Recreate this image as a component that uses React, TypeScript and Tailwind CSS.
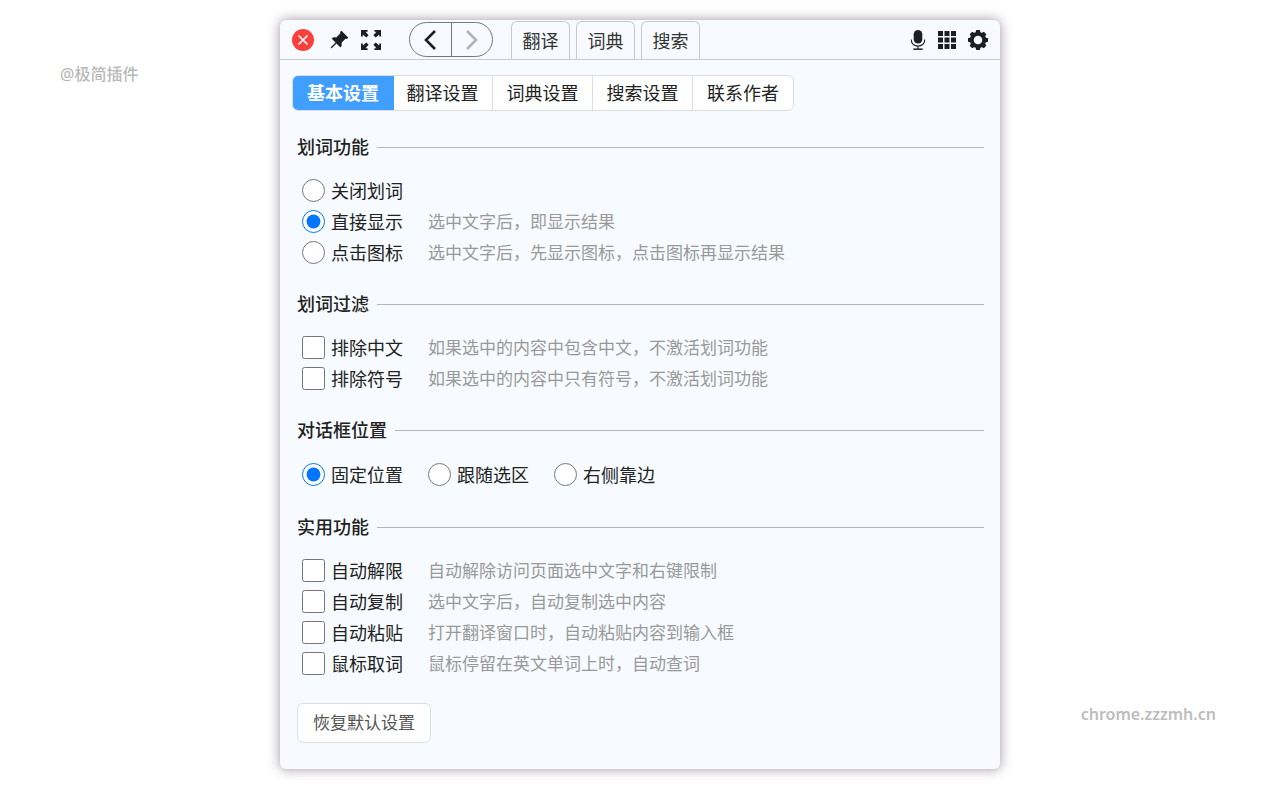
import { useState } from "react";
import { BsPinAngleFill } from "react-icons/bs";

const navTabs = ["翻译", "词典", "搜索"];

const settingTabs = ["基本设置", "翻译设置", "词典设置", "搜索设置", "联系作者"];

const selectionModes = [
  { value: "off", label: "关闭划词" },
  { value: "direct", label: "直接显示", hint: "选中文字后，即显示结果" },
  {
    value: "icon",
    label: "点击图标",
    hint: "选中文字后，先显示图标，点击图标再显示结果",
  },
];

const filters = [
  {
    value: "chinese",
    label: "排除中文",
    hint: "如果选中的内容中包含中文，不激活划词功能",
  },
  {
    value: "symbol",
    label: "排除符号",
    hint: "如果选中的内容中只有符号，不激活划词功能",
  },
];

const positions = [
  { value: "fixed", label: "固定位置" },
  { value: "follow", label: "跟随选区" },
  { value: "right", label: "右侧靠边" },
];

const utilities = [
  { value: "unlock", label: "自动解限", hint: "自动解除访问页面选中文字和右键限制" },
  { value: "copy", label: "自动复制", hint: "选中文字后，自动复制选中内容" },
  { value: "paste", label: "自动粘贴", hint: "打开翻译窗口时，自动粘贴内容到输入框" },
  { value: "hover", label: "鼠标取词", hint: "鼠标停留在英文单词上时，自动查词" },
];

const CloseIcon = () => (
  <svg viewBox="0 0 22 22" className="size-[22px]">
    <circle cx="11" cy="11" r="11" fill="#f9403c" />
    <path d="M6.5 6.5l9 9M15.5 6.5l-9 9" stroke="#fff" strokeWidth="1.6" />
  </svg>
);

const ExpandIcon = () => (
  <svg viewBox="0 0 20 20" className="size-5" fill="currentColor">
    {[0, 90, 180, 270].map((angle) => (
      <path
        key={angle}
        d="M0 0h6.6v1.8H4.5l3.1 3.5-2.3 2.3-3.5-3.1v2.1H0z"
        transform={`rotate(${angle} 10 10)`}
      />
    ))}
  </svg>
);

const MicIcon = () => (
  <svg viewBox="0 0 16 20" className="h-5 w-4" fill="none" stroke="currentColor">
    <rect x="3.7" y="0" width="8.6" height="13.6" rx="4.3" fill="currentColor" stroke="none" />
    <path d="M1.4 9.5v1.2a6.6 5.4 0 0 0 13.2 0V9.5M8 16.2V19" strokeWidth="1.1" />
    <path d="M3.3 19.2h9.4" strokeWidth="1.5" />
  </svg>
);

const GridIcon = () => (
  <svg viewBox="0 0 18 18" className="size-[18px]" fill="currentColor">
    {[0, 6.5, 13].map((y) =>
      [0, 6.5, 13].map((x) => (
        <rect key={`${x}-${y}`} x={x} y={y} width="5" height="5" />
      ))
    )}
  </svg>
);

const GearIcon = () => (
  <svg viewBox="0 0 20 20" className="size-5" fill="none" stroke="currentColor">
    <circle cx="10" cy="10" r="6.2" strokeWidth="3.8" />
    {[0, 45, 90, 135, 180, 225, 270, 315].map((angle) => (
      <path
        key={angle}
        d="M7.4 3L8.2 0h3.6l.8 3z"
        fill="currentColor"
        stroke="none"
        transform={`rotate(${angle} 10 10)`}
      />
    ))}
  </svg>
);

type Item = { value: string; label: string; hint?: string };

type OptionProps = {
  item: Item;
  type: "radio" | "checkbox";
  name: string;
  checked: boolean;
  onChange: () => void;
};

const Option = ({ item, type, name, checked, onChange }: OptionProps) => (
  <div className="flex h-[31px] items-center">
    <label className="flex w-[126px] shrink-0 items-center gap-1.5 text-lg whitespace-nowrap text-[#222]">
      <input
        type={type}
        name={name}
        checked={checked}
        onChange={onChange}
        className="size-[23px] shrink-0 accent-[#0075ff]"
      />
      {item.label}
    </label>
    {item.hint && <span className="text-[17px] text-[#999]">{item.hint}</span>}
  </div>
);

const Section = ({ title, children }: { title: string; children: React.ReactNode }) => (
  <fieldset className="mb-6 border-t border-[#b4b7ba]">
    <legend className="pr-2 text-lg leading-6 font-medium text-[#222]">{title}</legend>
    <div className="pt-4 pl-[5px]">{children}</div>
  </fieldset>
);

export default function App() {
  const [tab, setTab] = useState(settingTabs[0]);
  const [mode, setMode] = useState("direct");
  const [position, setPosition] = useState("fixed");
  const [enabled, setEnabled] = useState<string[]>([]);

  const toggle = (value: string) =>
    setEnabled((prev) =>
      prev.includes(value) ? prev.filter((v) => v !== value) : [...prev, value]
    );

  const reset = () => {
    setMode("direct");
    setPosition("fixed");
    setEnabled([]);
  };

  return (
    <div className="relative min-h-screen bg-white px-4 py-5 font-['Noto_Sans','Noto_Sans_CJK_SC',sans-serif]">
      <span className="absolute top-[62px] left-[60px] text-base font-medium text-[#b9b9b9]">
        @极简插件
      </span>
      <a
        href="#"
        className="absolute right-16 bottom-[74px] text-base font-semibold text-[#bdbdbd]"
      >
        chrome.zzzmh.cn
      </a>

      <main className="mx-auto max-w-[720px] rounded-md bg-[#f7fbff] pb-[26px] shadow-[0_0_12px_rgba(60,40,60,0.5)]">
        {/* Header */}
        <header className="flex h-10 items-center border-b border-[#c6cacf] px-3 text-[#1b1f23]">
          <button type="button" aria-label="关闭" className="mr-[15px]">
            <CloseIcon />
          </button>
          <button type="button" aria-label="固定" className="mr-3">
            <BsPinAngleFill className="size-5" />
          </button>
          <button type="button" aria-label="全屏">
            <ExpandIcon />
          </button>

          <div className="ml-7 flex h-[35px] w-[84px] overflow-hidden rounded-full border border-[#777]">
            <button
              type="button"
              aria-label="后退"
              className="flex flex-1 items-center justify-center border-r border-[#777]"
            >
              <svg viewBox="0 0 12 20" className="h-5 w-3" fill="none" stroke="currentColor">
                <path d="M11 1L2 10l9 9" strokeWidth="2.6" />
              </svg>
            </button>
            <button
              type="button"
              aria-label="前进"
              className="flex flex-1 items-center justify-center text-[#b0b3b7]"
            >
              <svg viewBox="0 0 12 20" className="h-5 w-3" fill="none" stroke="currentColor">
                <path d="M1 1l9 9-9 9" strokeWidth="2.6" />
              </svg>
            </button>
          </div>

          <nav className="ml-[18px] flex gap-1.5 self-end">
            {navTabs.map((name) => (
              <button
                key={name}
                type="button"
                className="h-[38px] w-[59px] rounded-t-md border border-b-0 border-[#c6cacf] text-lg text-[#333]"
              >
                {name}
              </button>
            ))}
          </nav>

          <div className="ml-auto flex items-center gap-3">
            <button type="button" aria-label="语音">
              <MicIcon />
            </button>
            <button type="button" aria-label="更多">
              <GridIcon />
            </button>
            <button type="button" aria-label="设置">
              <GearIcon />
            </button>
          </div>
        </header>

        {/* Setting tabs */}
        <div className="mx-3 mt-[15px] flex w-fit overflow-hidden rounded-md border border-[#d9dde2] bg-white">
          {settingTabs.map((name) => (
            <button
              key={name}
              type="button"
              onClick={() => setTab(name)}
              className={
                name === tab
                  ? "-m-px h-9 w-[102px] bg-[#409eff] text-lg font-bold text-white"
                  : "h-[34px] w-[100px] border-[#d9dde2] text-lg text-[#222] not-last:border-r"
              }
            >
              {name}
            </button>
          ))}
        </div>

        {/* Settings */}
        <form className="mt-6 mr-4 ml-[17px]">
          <Section title="划词功能">
            {selectionModes.map((item) => (
              <Option
                key={item.value}
                item={item}
                type="radio"
                name="mode"
                checked={mode === item.value}
                onChange={() => setMode(item.value)}
              />
            ))}
          </Section>

          <Section title="划词过滤">
            {filters.map((item) => (
              <Option
                key={item.value}
                item={item}
                type="checkbox"
                name={item.value}
                checked={enabled.includes(item.value)}
                onChange={() => toggle(item.value)}
              />
            ))}
          </Section>

          <Section title="对话框位置">
            <div className="flex flex-wrap py-px">
              {positions.map((item) => (
                <Option
                  key={item.value}
                  item={item}
                  type="radio"
                  name="position"
                  checked={position === item.value}
                  onChange={() => setPosition(item.value)}
                />
              ))}
            </div>
          </Section>

          <Section title="实用功能">
            {utilities.map((item) => (
              <Option
                key={item.value}
                item={item}
                type="checkbox"
                name={item.value}
                checked={enabled.includes(item.value)}
                onChange={() => toggle(item.value)}
              />
            ))}
          </Section>

          <button
            type="button"
            onClick={reset}
            className="h-10 rounded-md border border-[#dcdfe6] bg-white px-[15px] text-[17px] text-[#555]"
          >
            恢复默认设置
          </button>
        </form>
      </main>
    </div>
  );
}
